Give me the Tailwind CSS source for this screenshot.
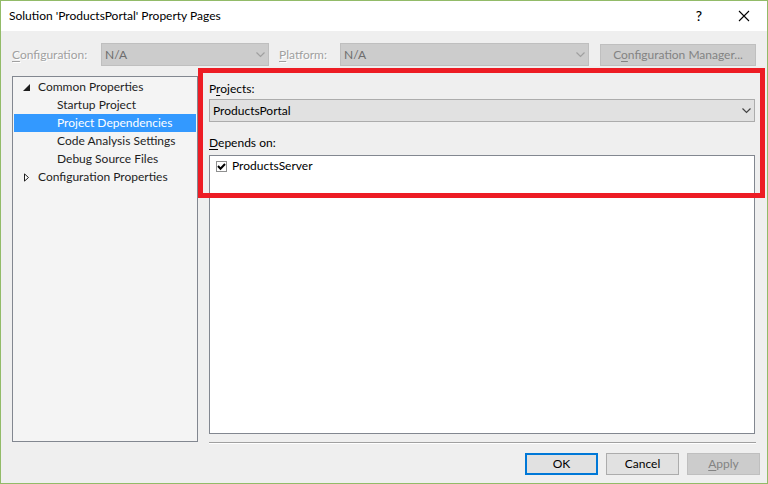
<!DOCTYPE html>
<html lang="en">
<head>
<meta charset="utf-8">
<title>Solution 'ProductsPortal' Property Pages</title>
<script src="https://cdn.jsdelivr.net/npm/@tailwindcss/browser@4"></script>
</head>
<body class="font-['Lato','Open_Sans',sans-serif] text-[12px] leading-[18px] text-black">
<main class="flex min-h-screen flex-col border border-[#92bb68] bg-[#efefef]">
  <header class="flex h-[30px] items-center bg-white pl-2 pr-[17px]">
    <h1 class="flex-1">Solution 'ProductsPortal' Property Pages</h1>
    <button type="button" aria-label="Help" class="mr-[33px] w-3 text-[14px] font-medium">?</button>
    <button type="button" aria-label="Close" class="w-3">
      <svg class="size-3" viewBox="0 0 12 12" fill="none" stroke="#000" stroke-width="1.1"><path d="M1 1l10 10M11 1L1 11"/></svg>
    </button>
  </header>

  <div class="flex items-center px-[11px] pt-3">
    <label for="configuration" class="w-[89px] text-[#a0a0a0] [text-shadow:1px_1px_0_#fff]"><u class="underline-offset-2">C</u>onfiguration:</label>
    <div class="relative min-w-0 flex-[168]">
      <select id="configuration" disabled class="block h-[23px] w-full appearance-none border border-[#bfbfbf] bg-[#cccccc] px-[3px] text-[#6d6d6d] opacity-100"><option>N/A</option></select>
      <svg class="pointer-events-none absolute right-1 top-2 h-[7px] w-[9px]" viewBox="0 0 9 7" fill="none" stroke="#a0a0a0" stroke-width="1.2"><path d="M.5 1.5l4 4 4-4"/></svg>
    </div>
    <label for="platform" class="ml-[10px] w-[61px] text-[#a0a0a0] [text-shadow:1px_1px_0_#fff]"><u class="underline-offset-2">P</u>latform:</label>
    <div class="relative min-w-0 flex-[249]">
      <select id="platform" disabled class="block h-[23px] w-full appearance-none border border-[#bfbfbf] bg-[#cccccc] px-[3px] text-[#6d6d6d] opacity-100"><option>N/A</option></select>
      <svg class="pointer-events-none absolute right-1 top-2 h-[7px] w-[9px]" viewBox="0 0 9 7" fill="none" stroke="#a0a0a0" stroke-width="1.2"><path d="M.5 1.5l4 4 4-4"/></svg>
    </div>
    <button type="button" disabled class="ml-[11px] mt-px h-[22px] w-[156px] border border-[#bfbfbf] bg-[#cccccc] leading-5 text-[#838383]">C<u class="underline-offset-2">o</u>nfiguration Manager...</button>
  </div>

  <div class="flex flex-1 gap-[11px] pl-[11px] pr-3 pt-[10px]">
    <nav aria-label="Property pages" class="w-[186px] shrink-0 border border-[#828790] bg-[#f4f4f4] p-px text-[#1e1e1e]">
      <ul>
        <li>
          <a href="#common" class="flex items-center pl-[9px]"><svg class="mr-2 h-[7px] w-[7px]" viewBox="0 0 7 7"><path d="M7 0v7H0z" fill="#1e1e1e"/></svg>Common Properties</a>
          <ul>
            <li><a href="#startup" class="block pl-[43px]">Startup Project</a></li>
            <li><a href="#dependencies" aria-current="page" class="block bg-[#3399ff] pl-[43px] text-white">Project Dependencies</a></li>
            <li><a href="#analysis" class="block pl-[43px]">Code Analysis Settings</a></li>
            <li><a href="#debug" class="block pl-[43px]">Debug Source Files</a></li>
          </ul>
        </li>
        <li><a href="#properties" class="flex items-center pl-[9px]"><svg class="mr-2 h-[9px] w-[7px]" viewBox="0 0 7 9"><path d="M1.5 .9v7.2L5.5 4.5z" fill="#fff" stroke="#1e1e1e"/></svg>Configuration Properties</a></li>
      </ul>
    </nav>

    <section class="relative -mb-0.5 flex min-w-0 flex-1 flex-col">
      <label for="projects" class="mt-[3px] leading-5">P<u class="underline-offset-2">r</u>ojects:</label>
      <div class="relative">
        <select id="projects" class="block h-[23px] w-full appearance-none border border-[#acacac] bg-[#e1e1e1] px-[3px]"><option>ProductsPortal</option></select>
        <svg class="pointer-events-none absolute right-1 top-2 h-[7px] w-[9px]" viewBox="0 0 9 7" fill="none" stroke="#444" stroke-width="1.2"><path d="M.5 1.5l4 4 4-4"/></svg>
      </div>
      <h2 id="depends" class="mt-[11px] leading-5"><u class="underline-offset-2">D</u>epends on:</h2>
      <div role="group" aria-labelledby="depends" class="mt-[2px] flex-1 border border-[#828790] bg-white px-[6px] pt-px">
        <label class="flex w-fit items-center gap-[5px]">
          <span class="relative size-[11px]">
            <input type="checkbox" checked class="peer block size-[11px] appearance-none border border-[#8e8f8f] bg-white">
            <svg class="pointer-events-none absolute inset-0 hidden size-[11px] peer-checked:block" viewBox="0 0 11 11" fill="none" stroke="#000" stroke-width="2"><path d="M2 5l2.5 2.7L9 3"/></svg>
          </span>
          ProductsServer
        </label>
      </div>
      <hr class="mt-2 -mr-px border-t border-[#a0a0a0] border-b border-b-white">
      <div class="pointer-events-none absolute -left-[11px] -right-[10px] -top-2 h-[130px] border-5 border-[#ed1c24]"></div>
    </section>
  </div>

  <footer class="flex justify-end gap-2 px-[7px] pb-2 pt-[11px]">
    <button type="button" class="h-[22px] w-[73px] border-2 border-[#0078d7] bg-[#e1e1e1]">OK</button>
    <button type="button" class="h-[22px] w-[73px] border border-[#acacac] bg-[#e1e1e1] leading-5">Cancel</button>
    <button type="button" disabled class="h-[22px] w-[73px] border border-[#bfbfbf] bg-[#cccccc] leading-5 text-[#838383]"><u class="underline-offset-2">A</u>pply</button>
  </footer>
</main>
</body>
</html>
